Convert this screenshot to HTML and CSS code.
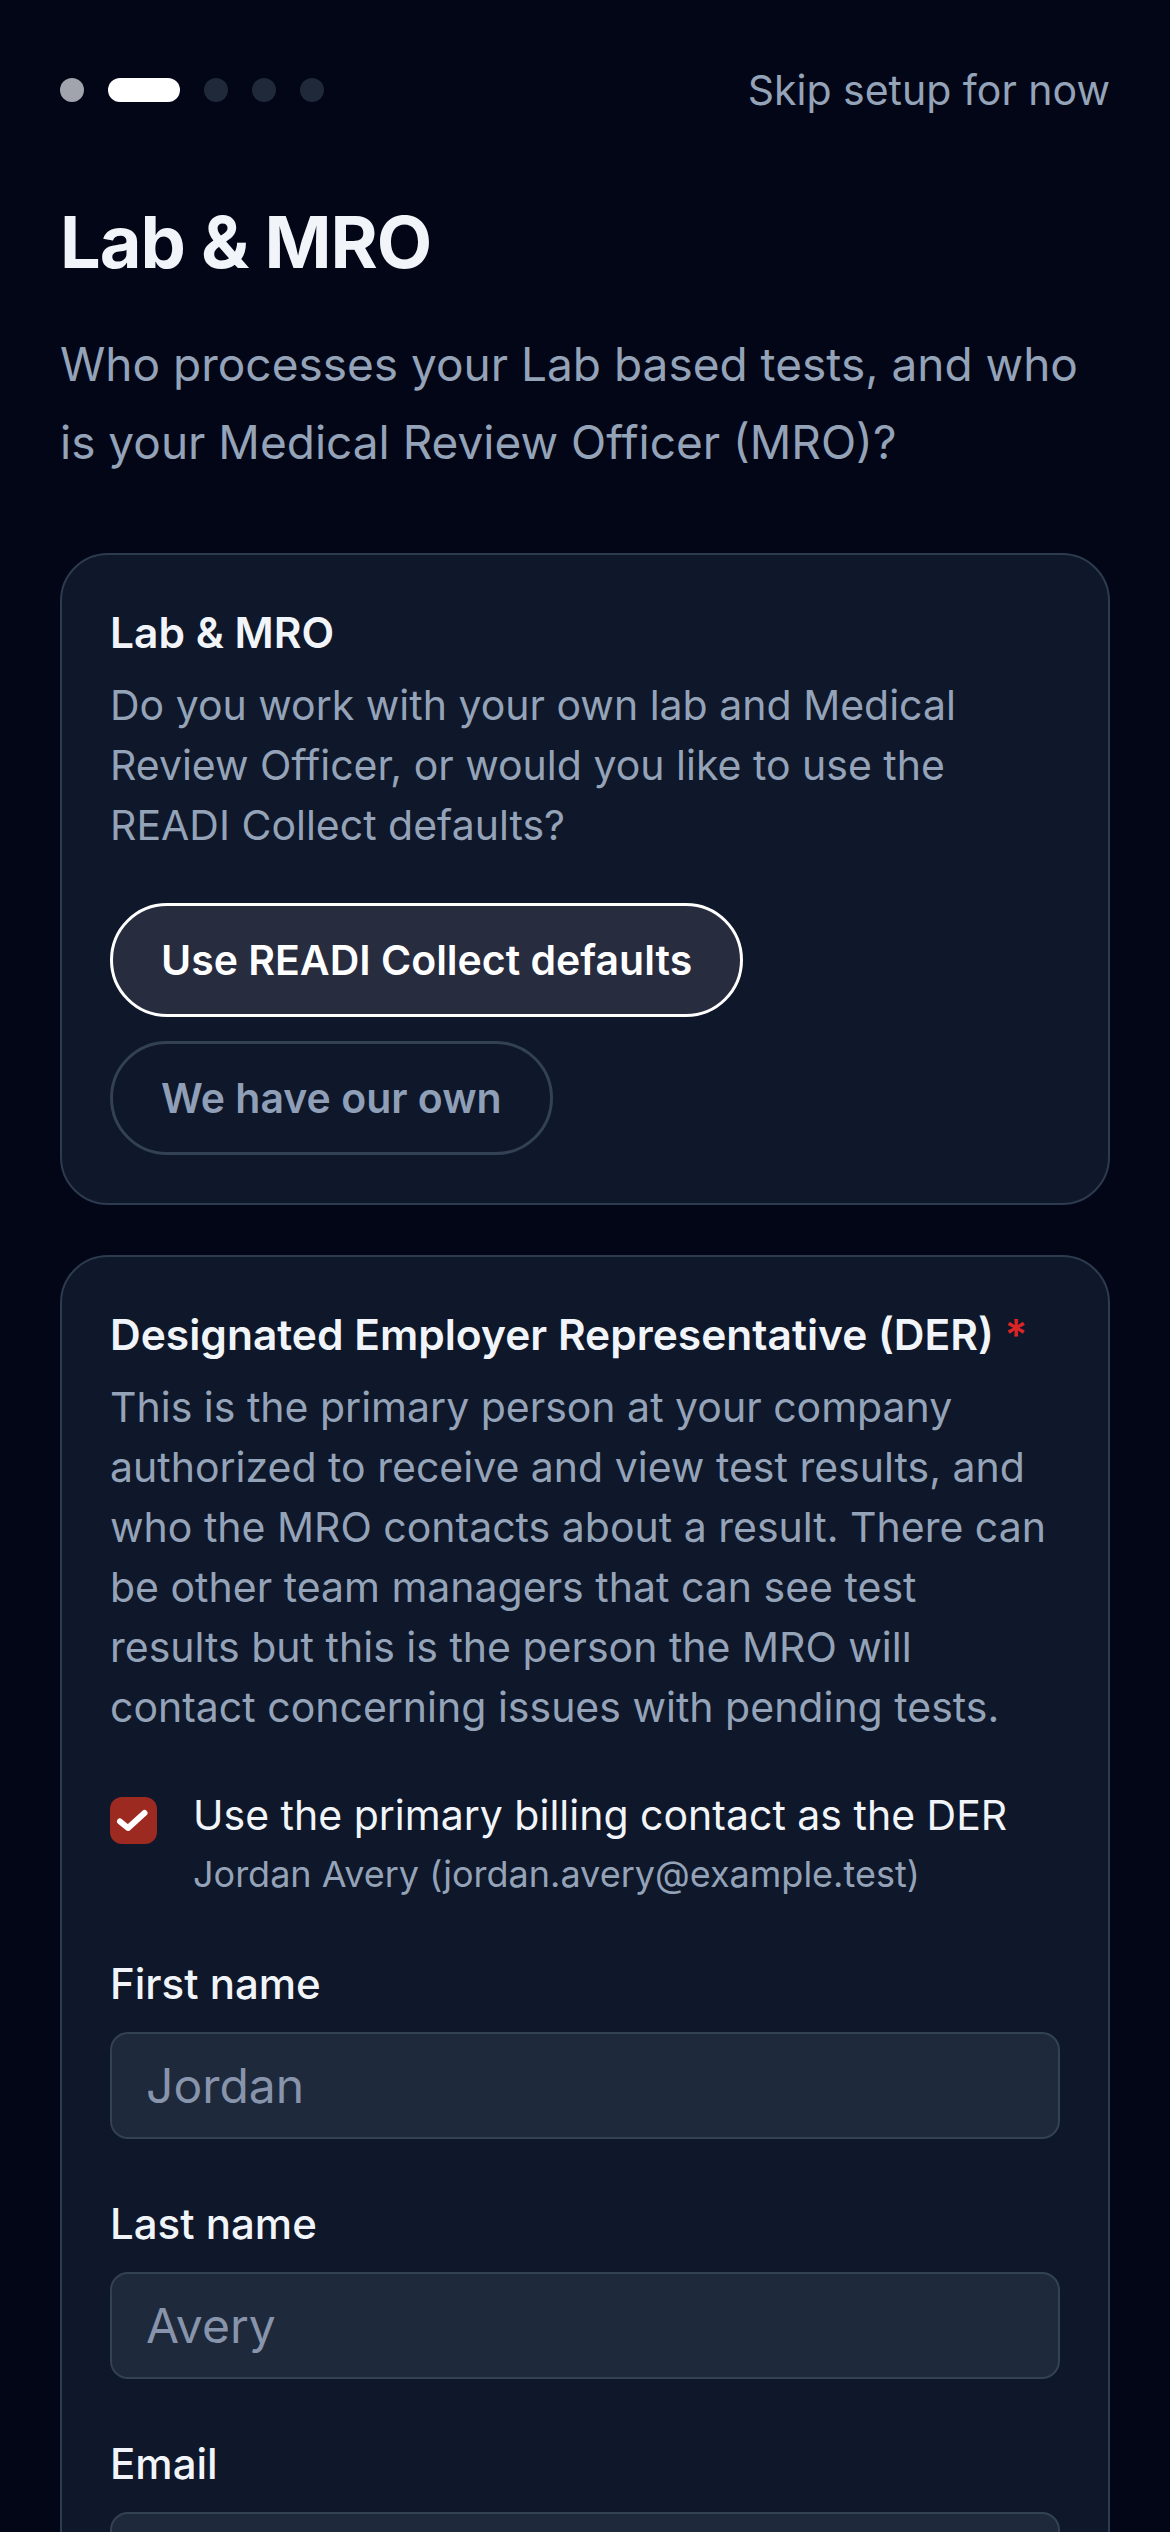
FILE: index.html
```html
<!DOCTYPE html>
<html>
    <head>
        <meta charset="utf-8">
        <title>Setup: Lab &amp; MRO</title>
        <link rel="stylesheet" href="styles.css">
    </head>
    <body>
        <header class="topbar">
            <div class="steps">
                <span class="step step-done"></span>
                <span class="step step-current"></span>
                <span class="step"></span>
                <span class="step"></span>
                <span class="step"></span>
            </div>
            <a class="skip" href="#">Skip setup for now</a>
        </header>

        <h1 class="title">Lab &amp; MRO</h1>
        <p class="lead">Who processes your Lab based tests, and who is your Medical Review Officer (MRO)?</p>

        <section class="card">
            <h2 class="card-title">Lab &amp; MRO</h2>
            <p class="card-text">Do you work with your own lab and Medical Review Officer, or would you like to use the READI Collect defaults?</p>
            <div class="choices">
                <button class="choice choice-selected" type="button">Use READI Collect defaults</button>
                <button class="choice" type="button">We have our own</button>
            </div>
        </section>

        <section class="card">
            <h2 class="card-title">Designated Employer Representative (DER) <span class="required">*</span></h2>
            <p class="card-text">This is the primary person at your company authorized to receive and view test results, and who the MRO contacts about a result. There can be other team managers that can see test results but this is the person the MRO will contact concerning issues with pending tests.</p>

            <label class="check-row">
                <span class="checkbox">
                    <svg width="47" height="47" viewBox="0 0 47 47">
                        <path d="M10 24.5 L18 31 L34.5 16" fill="none" stroke="#fff" stroke-width="6" stroke-linecap="round" stroke-linejoin="round"/>
                    </svg>
                </span>
                <span class="check-text">
                    <span class="check-label">Use the primary billing contact as the DER</span>
                    <span class="check-sub">Jordan Avery (jordan.avery@example.test)</span>
                </span>
            </label>

            <div class="field">
                <label class="field-label" for="first-name">First name</label>
                <input class="field-input" id="first-name" type="text" value="Jordan">
            </div>
            <div class="field">
                <label class="field-label" for="last-name">Last name</label>
                <input class="field-input" id="last-name" type="text" value="Avery">
            </div>
            <div class="field">
                <label class="field-label" for="email">Email</label>
                <input class="field-input" id="email" type="text" value="jordan.avery@example.test">
            </div>
        </section>
    </body>
</html>
```

FILE: styles.css
```css
body {
    margin: 0;
    padding: 60px 60px 0;
    background: #020617;
    color: #f1f5f9;
    font-family: Inter, "Noto Sans", sans-serif;
}

/* top bar: progress dots + skip link */
.topbar {
    display: flex;
    align-items: center;
    justify-content: space-between;
    height: 60px;
}

.steps {
    display: flex;
    gap: 24px;
}

.step {
    width: 24px;
    height: 24px;
    border-radius: 12px;
    background: #1f293a;
}

.step-done { background: #a1a3ad; }

.step-current {
    width: 72px;
    background: #fff;
}

.skip {
    color: #94a3b8;
    font-size: 41px;
    text-decoration: none;
}

.title {
    margin: 80px 0 0;
    font-size: 72px;
    line-height: 84px;
    font-weight: 700;
    letter-spacing: -1px;
}

.lead {
    margin: 41px 0 0;
    color: #94a3b8;
    font-size: 46px;
    line-height: 78px;
}

/* cards */
.card {
    margin-top: 72px;
    padding: 48px;
    border: 2px solid #2d3b4f;
    border-radius: 48px;
    background: #0f172a;
}

.card + .card { margin-top: 50px; }

.card-title {
    margin: 0;
    font-size: 42.5px;
    line-height: 60px;
    font-weight: 600;
}

.required { color: #dc2626; }

/* a little right padding keeps the wrap points of the original */
.card-text {
    margin: 12px 0 0;
    padding-right: 10px;
    color: #94a3b8;
    font-size: 41px;
    line-height: 60px;
}

.choices {
    display: flex;
    flex-direction: column;
    align-items: flex-start;
    gap: 24px;
    margin-top: 48px;
}

.choice {
    padding: 24px 48px;
    border: 3px solid #334155;
    border-radius: 60px;
    background: transparent;
    color: #8f9fb7;
    font-family: inherit;
    font-size: 41px;
    line-height: 60px;
    font-weight: 600;
}

.choice-selected {
    border-color: #fff;
    background: #272c3f;
    color: #fff;
}

/* checkbox row */
.check-row {
    display: flex;
    align-items: flex-start;
    gap: 36px;
    margin-top: 48px;
}

.checkbox {
    flex: none;
    width: 47px;
    height: 47px;
    margin-top: 12px;
    border-radius: 12px;
    background: #9d2a21;
}

.checkbox svg { display: block; }

.check-text {
    display: flex;
    flex-direction: column;
}

.check-label {
    font-size: 41px;
    line-height: 60px;
}

.check-sub {
    margin-top: 5px;
    color: #94a3b8;
    font-size: 36px;
    line-height: 48px;
}

/* form fields */
.field { margin-top: 55px; }

.check-row + .field { margin-top: 56px; }

.field-label {
    display: block;
    margin-bottom: 18px;
    font-size: 42px;
    line-height: 60px;
    font-weight: 500;
}

.field-input {
    display: block;
    box-sizing: border-box;
    width: 100%;
    height: 107px;
    padding: 0 34px;
    border: 2px solid #334155;
    border-radius: 18px;
    background: #1e293b;
    color: #8794ab;
    font-family: inherit;
    font-size: 48px;
}
```
